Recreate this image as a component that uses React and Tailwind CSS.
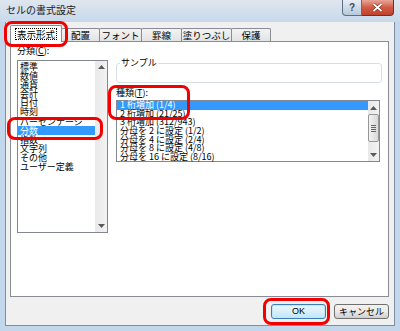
import React from 'react';

const categories = ['標準', '数値', '通貨', '会計', '日付', '時刻', 'パーセンテージ', '分数', '指数', '文字列', 'その他', 'ユーザー定義'];

const types = [
  '1 桁増加 (1/4)',
  '2 桁増加 (21/25)',
  '3 桁増加 (312/943)',
  '分母を 2 に設定 (1/2)',
  '分母を 4 に設定 (2/4)',
  '分母を 8 に設定 (4/8)',
  '分母を 16 に設定 (8/16)',
];

// other tabs (the selected one is drawn separately)
const tabs = [
  { label: '配置', w: 'w-[39px]' },
  { label: 'フォント', w: 'w-[43px]' },
  { label: '罫線', w: 'w-[41px]' },
  { label: '塗りつぶし', w: 'w-[51px]' },
  { label: '保護', w: 'w-[40px]' },
];

const Arrow = ({ up }) => (
  <svg width="7" height="4" viewBox="0 0 7 4">
    {up ? <path d="M0 4 L3.5 0 L7 4 Z" fill="#5a5a5a" /> : <path d="M0 0 L3.5 4 L7 0 Z" fill="#5a5a5a" />}
  </svg>
);

const RedMark = ({ cls }) => (
  <div className={`absolute border-[3px] border-[#f20000] rounded-[8px] pointer-events-none ${cls}`} />
);

const App = () => {
  return (
    <div className="relative w-[400px] h-[331px] overflow-hidden flex flex-col bg-[#c2d6ec] text-black text-[9px] font-['Noto_Sans_CJK_JP','Noto_Sans',sans-serif]">
      {/* Title bar */}
      <div className="h-[22px] flex items-start bg-gradient-to-b from-[#dfe6ee] to-[#c8d9eb]">
        <div className="pl-[6px] pt-[4px] text-[10px] leading-[11px] text-[#1a1a1a]">セルの書式設定</div>
        <div className="ml-auto mr-[6px] flex">
          <div className="w-[20px] h-[16px] rounded-bl-[4px] border border-t-0 border-[#5d6e84] bg-gradient-to-b from-[#e6edf5] to-[#b9c8da] flex items-center justify-center text-[10px] leading-[10px] text-[#3a4a5e] font-bold font-['Liberation_Sans',sans-serif]">
            ?
          </div>
          <div className="w-[32px] h-[16px] rounded-br-[4px] border border-t-0 border-l-0 border-[#6b3030] bg-gradient-to-b from-[#e8a597] via-[#cf5a45] to-[#c2412a] flex items-center justify-center">
            <svg width="11" height="9" viewBox="0 0 11 9">
              <path d="M1.5 1 L9.5 8 M9.5 1 L1.5 8" stroke="#6e2a20" strokeWidth="3" />
              <path d="M1.5 1 L9.5 8 M9.5 1 L1.5 8" stroke="#ffffff" strokeWidth="1.8" />
            </svg>
          </div>
        </div>
      </div>

      {/* Dialog body */}
      <div className="flex-1 mx-[5px] mb-[5px] border-x border-b border-[#7d8ea3] bg-[#f0f0f0] flex flex-col">
        {/* Tab strip */}
        <div className="pl-[4px] pt-[3px] flex items-end h-[19px]">
          <div className="relative z-10 -mb-px w-[52px] h-[17px] bg-white border-x border-t border-[#898c95] rounded-t-[2px] flex items-start justify-center pt-[2px]">
            <span className="border border-dotted border-black px-[1px] leading-[10px] text-[9.5px]">表示形式</span>
          </div>
          {tabs.map((t) => (
            <div
              key={t.label}
              className={`${t.w} -ml-px h-[13px] border-x border-t border-[#898c95] rounded-t-[2px] bg-gradient-to-b from-[#f3f3f3] to-[#e3e3e3] flex items-center justify-center text-[9.5px] leading-[10px]`}
            >
              {t.label}
            </div>
          ))}
        </div>

        {/* Tab panel */}
        <div className="ml-[4px] mr-[5px] h-[256px] bg-white border border-[#898c95] flex pl-[6px] pt-[4px] gap-[8px]">
          {/* Category column */}
          <div className="w-[91px] flex flex-col">
            <div className="h-[10px] leading-[10px] mb-[4px]">分類(<span className="underline">C</span>):</div>
            <div className="h-[173px] border border-[#828790] flex">
              <div className="flex-1 flex flex-col pt-px">
                {categories.map((c) => (
                  <div
                    key={c}
                    className={`h-[9.1px] leading-[9.1px] pl-[2px] whitespace-nowrap ${c === '分数' ? 'bg-[#3399ff] text-white' : ''}`}
                  >
                    {c}
                  </div>
                ))}
              </div>
              <div className="w-[12px] bg-gradient-to-r from-[#e9e9e9] to-[#f2f2f2] flex flex-col justify-between items-center py-[4px]">
                <Arrow up />
                <Arrow />
              </div>
            </div>
          </div>

          {/* Type column */}
          <div className="w-[266px] flex flex-col">
            <fieldset className="mt-[12px] h-[25px] border border-[#d5dfe5] rounded-[3px] px-[3px]">
              <legend className="px-[1px] leading-[10px]">サンプル</legend>
            </fieldset>
            <div className="mt-[5px] h-[10px] leading-[10px] mb-[2px]">種類(<span className="underline">T</span>):</div>
            <div className="w-[264px] h-[62px] border border-[#828790] flex">
              <div className="flex-1 flex flex-col">
                {types.map((t, i) => (
                  <div
                    key={t}
                    className={`h-[8.7px] leading-[8.7px] pl-[3px] whitespace-nowrap ${i === 0 ? 'bg-[#3399ff] text-white' : ''}`}
                  >
                    {t}
                  </div>
                ))}
              </div>
              <div className="w-[11px] bg-gradient-to-r from-[#e9e9e9] to-[#f2f2f2] flex flex-col items-center">
                <div className="h-[13px] flex items-center justify-center">
                  <Arrow up />
                </div>
                <div className="w-[11px] h-[28px] border border-[#979797] rounded-[2px] bg-gradient-to-r from-[#f3f3f3] to-[#d8d8d8] flex flex-col items-center justify-center gap-[1px]">
                  <div className="w-[5px] h-px bg-[#666]" />
                  <div className="w-[5px] h-px bg-[#666]" />
                  <div className="w-[5px] h-px bg-[#666]" />
                  <div className="w-[5px] h-px bg-[#666]" />
                </div>
                <div className="flex-1 flex items-end justify-center pb-[4px]">
                  <Arrow />
                </div>
              </div>
            </div>
          </div>
        </div>

        {/* Buttons */}
        <div className="flex justify-end gap-[8px] pt-[7px] pr-[5px]">
          <button className="w-[55px] h-[15px] rounded-[3px] border border-[#3c7fb1] bg-gradient-to-b from-[#eaf6fd] via-[#d9f0fc] to-[#bee6fd] shadow-[inset_0_0_0_1px_#c5e6f8] text-[9px] leading-[13px] font-['Liberation_Sans',sans-serif]">
            OK
          </button>
          <button className="w-[55px] h-[15px] rounded-[3px] border border-[#707070] bg-gradient-to-b from-[#f2f2f2] via-[#ebebeb] to-[#cfcfcf] text-[9px] leading-[13px]">
            キャンセル
          </button>
        </div>
      </div>

      {/* Red annotation marks */}
      <RedMark cls="left-[4px] top-[21px] w-[64px] h-[26px]" />
      <RedMark cls="left-[7px] top-[117px] w-[96px] h-[23px]" />
      <RedMark cls="left-[108px] top-[85px] w-[82px] h-[35px]" />
      <RedMark cls="left-[263px] top-[298px] w-[67px] h-[27px]" />
    </div>
  );
};

export default App;
